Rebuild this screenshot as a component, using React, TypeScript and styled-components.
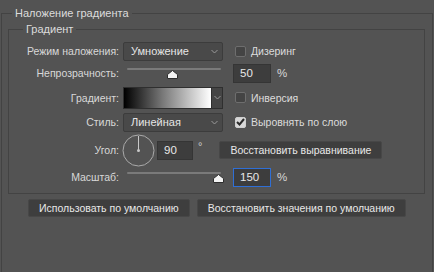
import React from "react";
import styled, { createGlobalStyle } from "styled-components";

const Global = createGlobalStyle`
  html, body { margin: 0; padding: 0; background: #535353; }
  body { font-family: "Liberation Sans", Arial, sans-serif; font-size: 10.5px; color: #d8d8d8; }
`;

const Page = styled.div`
  width: 434px;
  height: 272px;
  box-sizing: border-box;
  padding: 5px 0 0 1px;
  overflow: hidden;
  background: #535353;
`;

const Group = styled.fieldset<{ $outer?: boolean }>`
  margin: 0;
  min-inline-size: 0;
  border: 1px solid #434343;
  box-sizing: border-box;
  width: ${(p) => (p.$outer ? "432px" : "417px")};
  padding: ${(p) => (p.$outer ? "0 7px 0 6px" : "3px 0 6px 0")};
  ${(p) => (p.$outer ? "height: 300px;" : "")}
`;

const Legend = styled.legend<{ $indent: number }>`
  margin-left: ${(p) => p.$indent}px;
  padding: 0 3px;
  line-height: 16px;
  font-size: 11px;
  color: #dcdcdc;
`;

const Grid = styled.div`
  display: grid;
  grid-template-columns: 110px 104px 1fr;
  grid-template-rows: 22px 22px 27px 22px 34px 20px;
`;

const Label = styled.div`
  justify-self: end;
  align-self: center;
  white-space: nowrap;
`;

const ControlCell = styled.div<{ $span?: boolean }>`
  display: flex;
  align-items: center;
  padding-left: 4px;
  ${(p) => (p.$span ? "grid-column: 2 / 4;" : "")}
`;

const SideCell = styled.div<{ $gap?: number }>`
  display: flex;
  align-items: center;
  padding-left: 10px;
  gap: ${(p) => p.$gap ?? 6}px;
`;

const Select = styled.div`
  width: 104px;
  height: 19px;
  box-sizing: border-box;
  background: #494949;
  border: 1px solid #3c3c3c;
  border-radius: 2px;
  display: flex;
  align-items: center;
  justify-content: space-between;
  padding: 0 4px 0 7px;
  color: #e6e6e6;
  font-size: 11px;
`;

const Chevron = () => (
  <svg width="7" height="5" viewBox="0 0 7 5">
    <polyline points="0.5,1 3.5,4 6.5,1" fill="none" stroke="#9a9a9a" strokeWidth="1" />
  </svg>
);

const GradientPicker = styled.div`
  display: flex;
  height: 22px;
  width: 104px;
  box-sizing: border-box;
  border: 1px solid #2f2f2f;
  background: #434343;
`;

const GradientSwatch = styled.div`
  flex: 1;
  background: linear-gradient(to right, #000 0%, #7a7a7a 45%, #fff 100%);
  border-right: 1px solid #2f2f2f;
`;

const GradientArrow = styled.div`
  width: 10px;
  display: flex;
  align-items: center;
  justify-content: center;
  background: #454545;
`;

const Check = styled.span<{ $checked?: boolean }>`
  width: 11px;
  height: 11px;
  box-sizing: border-box;
  margin-left: 2px;
  border-radius: 2px;
  border: 1px solid ${(p) => (p.$checked ? "#cfcfcf" : "#6e6e6e")};
  background: ${(p) => (p.$checked ? "#d8d8d8" : "#444444")};
  display: flex;
  align-items: center;
  justify-content: center;
`;

const CheckMark = () => (
  <svg width="9" height="8" viewBox="0 0 9 8">
    <polyline points="1,4 3.5,6.5 8,1" fill="none" stroke="#2a2a2a" strokeWidth="2" />
  </svg>
);

const CheckText = styled.span`
  color: #dcdcdc;
  white-space: nowrap;
`;

const SliderBox = styled.div`
  position: relative;
  width: 94px;
  height: 14px;
  margin-left: 4px;
`;

const Track = styled.div`
  position: absolute;
  left: 0;
  right: 0;
  top: 2px;
  height: 2px;
  background: #7a7a7a;
  border-radius: 1px;
`;

const Thumb = styled.svg`
  position: absolute;
  top: 4px;
  margin-left: -5px;
`;

const Slider = ({ value }: { value: number }) => (
  <SliderBox>
    <Track />
    <Thumb width="11" height="9" viewBox="0 0 11 9" style={{ left: `${value}%` }}>
      <polygon points="5.5,0.5 10.5,4.5 10.5,8.5 0.5,8.5 0.5,4.5" fill="#f4f4f4" stroke="#2e2e2e" strokeWidth="1" />
    </Thumb>
  </SliderBox>
);

const NumInput = styled.div<{ $focus?: boolean; $w?: number }>`
  width: ${(p) => p.$w ?? 38}px;
  height: 19px;
  box-sizing: border-box;
  background: #3d3d3d;
  border: 1px solid ${(p) => (p.$focus ? "#2f6fd6" : "#353535")};
  display: flex;
  align-items: center;
  padding-left: 6px;
  color: #e8e8e8;
  font-size: 11.5px;
`;

const Unit = styled.span`
  color: #d8d8d8;
  font-size: 11.5px;
`;

const Dial = () => (
  <svg width="33" height="33" viewBox="0 0 33 33" style={{ marginLeft: -1 }}>
    <circle cx="16.5" cy="16.5" r="15.5" fill="none" stroke="#aaaaaa" strokeWidth="1" />
    <line x1="16.5" y1="16.5" x2="16.5" y2="2" stroke="#c8c8c8" strokeWidth="1" />
    <circle cx="16.5" cy="16.5" r="1.5" fill="#c8c8c8" />
  </svg>
);

const Degree = styled.span`
  margin: -8px 0 0 5px;
  color: #cfcfcf;
  font-size: 11px;
`;

const Button = styled.div<{ $ml?: number }>`
  height: 18px;
  box-sizing: border-box;
  display: inline-flex;
  align-items: center;
  justify-content: center;
  padding: 0 10px;
  background: #3e3e3e;
  border: 1px solid #474747;
  border-radius: 2px;
  color: #e8e8e8;
  white-space: nowrap;
  margin-left: ${(p) => p.$ml ?? 0}px;
`;

const ButtonRow = styled.div`
  display: flex;
  gap: 7px;
  padding: 5px 0 0 20px;
`;

export default function App() {
  return (
    <Page>
      <Global />
      <Group $outer>
        <Legend $indent={4}>Наложение градиента</Legend>
        <Group>
          <Legend $indent={14}>Градиент</Legend>
          <Grid>
            <Label>Режим наложения:</Label>
            <ControlCell>
              <Select>
                Умножение
                <Chevron />
              </Select>
            </ControlCell>
            <SideCell $gap={5}>
              <Check />
              <CheckText>Дизеринг</CheckText>
            </SideCell>

            <Label>Непрозрачность:</Label>
            <ControlCell>
              <Slider value={48} />
            </ControlCell>
            <SideCell>
              <NumInput>50</NumInput>
              <Unit>%</Unit>
            </SideCell>

            <Label>Градиент:</Label>
            <ControlCell>
              <GradientPicker>
                <GradientSwatch />
                <GradientArrow>
                  <Chevron />
                </GradientArrow>
              </GradientPicker>
            </ControlCell>
            <SideCell $gap={5}>
              <Check />
              <CheckText>Инверсия</CheckText>
            </SideCell>

            <Label>Стиль:</Label>
            <ControlCell>
              <Select>
                Линейная
                <Chevron />
              </Select>
            </ControlCell>
            <SideCell $gap={5}>
              <Check $checked>
                <CheckMark />
              </Check>
              <CheckText>Выровнять по слою</CheckText>
            </SideCell>

            <Label>Угол:</Label>
            <ControlCell $span>
              <Dial />
              <NumInput $w={36} style={{ marginLeft: 2 }}>90</NumInput>
              <Degree>°</Degree>
              <Button $ml={17}>Восстановить выравнивание</Button>
            </ControlCell>

            <Label>Масштаб:</Label>
            <ControlCell>
              <Slider value={97} />
            </ControlCell>
            <SideCell>
              <NumInput $focus>150</NumInput>
              <Unit>%</Unit>
            </SideCell>
          </Grid>
        </Group>
        <ButtonRow>
          <Button>Использовать по умолчанию</Button>
          <Button>Восстановить значения по умолчанию</Button>
        </ButtonRow>
      </Group>
    </Page>
  );
}
